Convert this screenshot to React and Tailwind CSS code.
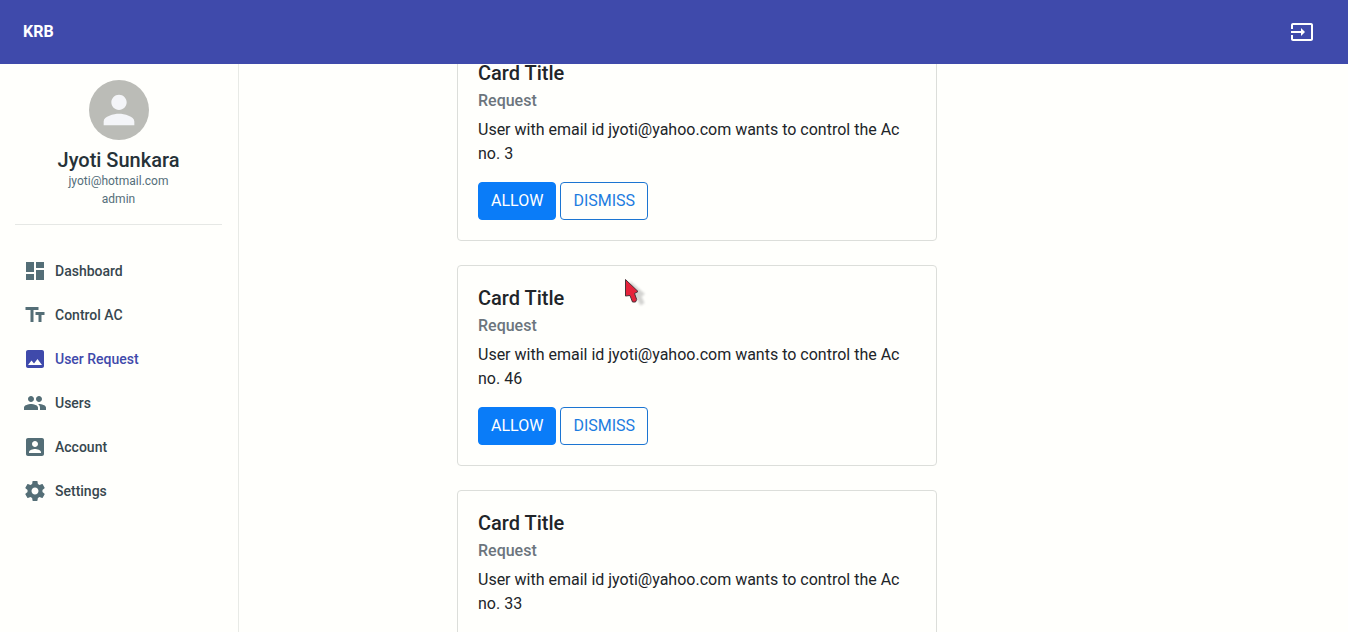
import React from "react";
import { MdDashboard, MdImage, MdPerson, MdTextFields } from "react-icons/md";

function PeopleIcon({ className }) {
  return (
    <svg viewBox="0 0 24 24" fill="currentColor" className={className} aria-hidden="true">
      <path d="M16 11c1.66 0 2.99-1.34 2.99-3S17.66 5 16 5c-1.66 0-3 1.34-3 3s1.34 3 3 3zm-8 0c1.66 0 2.99-1.34 2.99-3S9.66 5 8 5C6.34 5 5 6.34 5 8s1.34 3 3 3zm0 2c-2.33 0-7 1.17-7 3.5V19h14v-2.5c0-2.33-4.67-3.5-7-3.5zm8 0c-.29 0-.62.02-.97.05 1.16.84 1.97 1.97 1.97 3.45V19h6v-2.5c0-2.33-4.67-3.5-7-3.5z" />
    </svg>
  );
}

function AccountIcon({ className }) {
  return (
    <svg viewBox="0 0 24 24" fill="currentColor" className={className} aria-hidden="true">
      <path d="M3 5v14c0 1.1.89 2 2 2h14c1.1 0 2-.9 2-2V5c0-1.1-.9-2-2-2H5c-1.11 0-2 .9-2 2zm12 4c0 1.66-1.34 3-3 3s-3-1.34-3-3 1.34-3 3-3 3 1.34 3 3zm-9 8c0-2 4-3.1 6-3.1s6 1.1 6 3.1v1H6v-1z" />
    </svg>
  );
}

function SettingsIcon({ className }) {
  return (
    <svg viewBox="0 0 24 24" fill="currentColor" className={className} aria-hidden="true">
      <path d="M19.43 12.98c.04-.32.07-.64.07-.98s-.03-.66-.07-.98l2.11-1.65c.19-.15.24-.42.12-.64l-2-3.46c-.12-.22-.39-.3-.61-.22l-2.49 1c-.52-.4-1.08-.73-1.69-.98l-.38-2.65C14.46 2.18 14.25 2 14 2h-4c-.25 0-.46.18-.49.42l-.38 2.65c-.61.25-1.17.59-1.69.98l-2.49-1c-.23-.09-.49 0-.61.22l-2 3.46c-.13.22-.07.49.12.64l2.11 1.65c-.04.32-.07.65-.07.98s.03.66.07.98l-2.11 1.65c-.19.15-.24.42-.12.64l2 3.46c.12.22.39.3.61.22l2.49-1c.52.4 1.08.73 1.69.98l.38 2.65c.03.24.24.42.49.42h4c.25 0 .46-.18.49-.42l.38-2.65c.61-.25 1.17-.59 1.69-.98l2.49 1c.23.09.49 0 .61-.22l2-3.46c.12-.22.07-.49-.12-.64l-2.11-1.65zM12 15.5c-1.93 0-3.5-1.57-3.5-3.5s1.57-3.5 3.5-3.5 3.5 1.57 3.5 3.5-1.57 3.5-3.5 3.5z" />
    </svg>
  );
}

function InputIcon({ className }) {
  return (
    <svg viewBox="0 0 24 24" fill="currentColor" className={className} aria-hidden="true">
      <path d="M21 3.01H3c-1.1 0-2 .9-2 2V9h2V4.99h18v14.03H3V15H1v4.01c0 1.1.9 1.98 2 1.98h18c1.1 0 2-.88 2-1.98v-14c0-1.11-.9-2-2-2zM11 16l4-4-4-4v3H1v2h10v3z" />
    </svg>
  );
}

const links = [
  { label: "Dashboard", icon: MdDashboard },
  { label: "Control AC", icon: MdTextFields },
  { label: "User Request", icon: MdImage, active: true },
  { label: "Users", icon: PeopleIcon },
  { label: "Account", icon: AccountIcon },
  { label: "Settings", icon: SettingsIcon },
];

const requests = [3, 46, 33];

function TopBar() {
  return (
    <header className="relative z-10 flex h-16 shrink-0 items-center justify-between bg-[#3f4aab] pl-[23px] pr-[34px] text-white">
      <a href="#home" className="text-base font-bold">
        KRB
      </a>
      <button type="button" aria-label="Sign out">
        <InputIcon className="size-6" />
      </button>
    </header>
  );
}

function Sidebar() {
  return (
    <aside className="w-[239px] shrink-0 border-r border-[#e8eae6] pt-4 pr-4 pl-[15px]">
      <div className="flex flex-col items-center border-b border-[#e6e8e5] pb-4">
        <div className="flex size-[60px] items-center justify-center rounded-full bg-[#bbbcb7] text-[#f4f5f8]">
          <MdPerson className="size-[46px]" />
        </div>
        <h1 className="mt-2 text-xl leading-6 font-medium text-[#263238]">Jyoti Sunkara</h1>
        <p className="text-xs leading-[18px] text-[#546e7a]">jyoti@hotmail.com</p>
        <p className="text-xs leading-[18px] text-[#546e7a]">admin</p>
      </div>
      <nav className="mt-6">
        <ul>
          {links.map(({ label, icon: Icon, active }) => (
            <li key={label}>
              <a
                href="#section"
                aria-current={active ? "page" : undefined}
                className={
                  active
                    ? "flex h-11 items-center gap-2 px-2 text-sm font-medium text-[#3f4aab]"
                    : "flex h-11 items-center gap-2 px-2 text-sm font-medium text-[#37474f]"
                }
              >
                <Icon className={active ? "size-6" : "size-6 text-[#546e76]"} />
                {label}
              </a>
            </li>
          ))}
        </ul>
      </nav>
    </aside>
  );
}

function RequestCard({ unit }) {
  return (
    <article className="rounded-sm border border-[#dcdeda] p-5 text-base text-[#212529]">
      <h2 className="text-xl leading-6 font-medium">Card Title</h2>
      <h3 className="mt-1.5 leading-[19px] font-medium text-[#6c757d]">Request</h3>
      <p className="mt-2 leading-6">{`User with email id jyoti@yahoo.com wants to control the Ac no. ${unit}`}</p>
      <div className="mt-4 flex gap-1">
        <button type="button" className="rounded-sm border border-[#0a7cf8] bg-[#0a7cf8] px-3 py-1.5 leading-6 text-white">
          ALLOW
        </button>
        <button type="button" className="rounded-sm border border-[#1c75d2] px-3 py-1.5 leading-6 text-[#1c7ce0]">
          DISMISS
        </button>
      </div>
    </article>
  );
}

function Cursor() {
  return (
    <svg className="pointer-events-none absolute top-[277px] left-[623px] z-20" width="26" height="32" viewBox="0 0 26 32" aria-hidden="true">
      <defs>
        <filter id="soft" x="-30%" y="-30%" width="160%" height="160%">
          <feGaussianBlur stdDeviation="1" />
        </filter>
      </defs>
      <path d="M7 4 L22 17 L18.5 19.5 L21.5 26 L17.5 28.5 L14 22 L8 20 Z" fill="#555" opacity=".25" filter="url(#soft)" />
      <path d="M2.5 2.5 L15 14.5 L11.5 16.5 L13.7 22.5 L12.5 25 L9.5 25 L7 18.5 L2.5 19 Z" fill="#e5233b" stroke="#493238" strokeWidth="1" strokeLinejoin="round" />
    </svg>
  );
}

export default function App() {
  return (
    <div className="flex h-screen flex-col overflow-hidden bg-[#fffffc] font-[Roboto,sans-serif]">
      <TopBar />
      <div className="flex min-h-0 flex-1">
        <Sidebar />
        <main className="min-w-0 flex-1 overflow-hidden pl-[218px]">
          <div className="-mt-6 flex max-w-[480px] flex-col gap-6">
            {requests.map((unit) => (
              <RequestCard key={unit} unit={unit} />
            ))}
          </div>
        </main>
      </div>
      <Cursor />
    </div>
  );
}
